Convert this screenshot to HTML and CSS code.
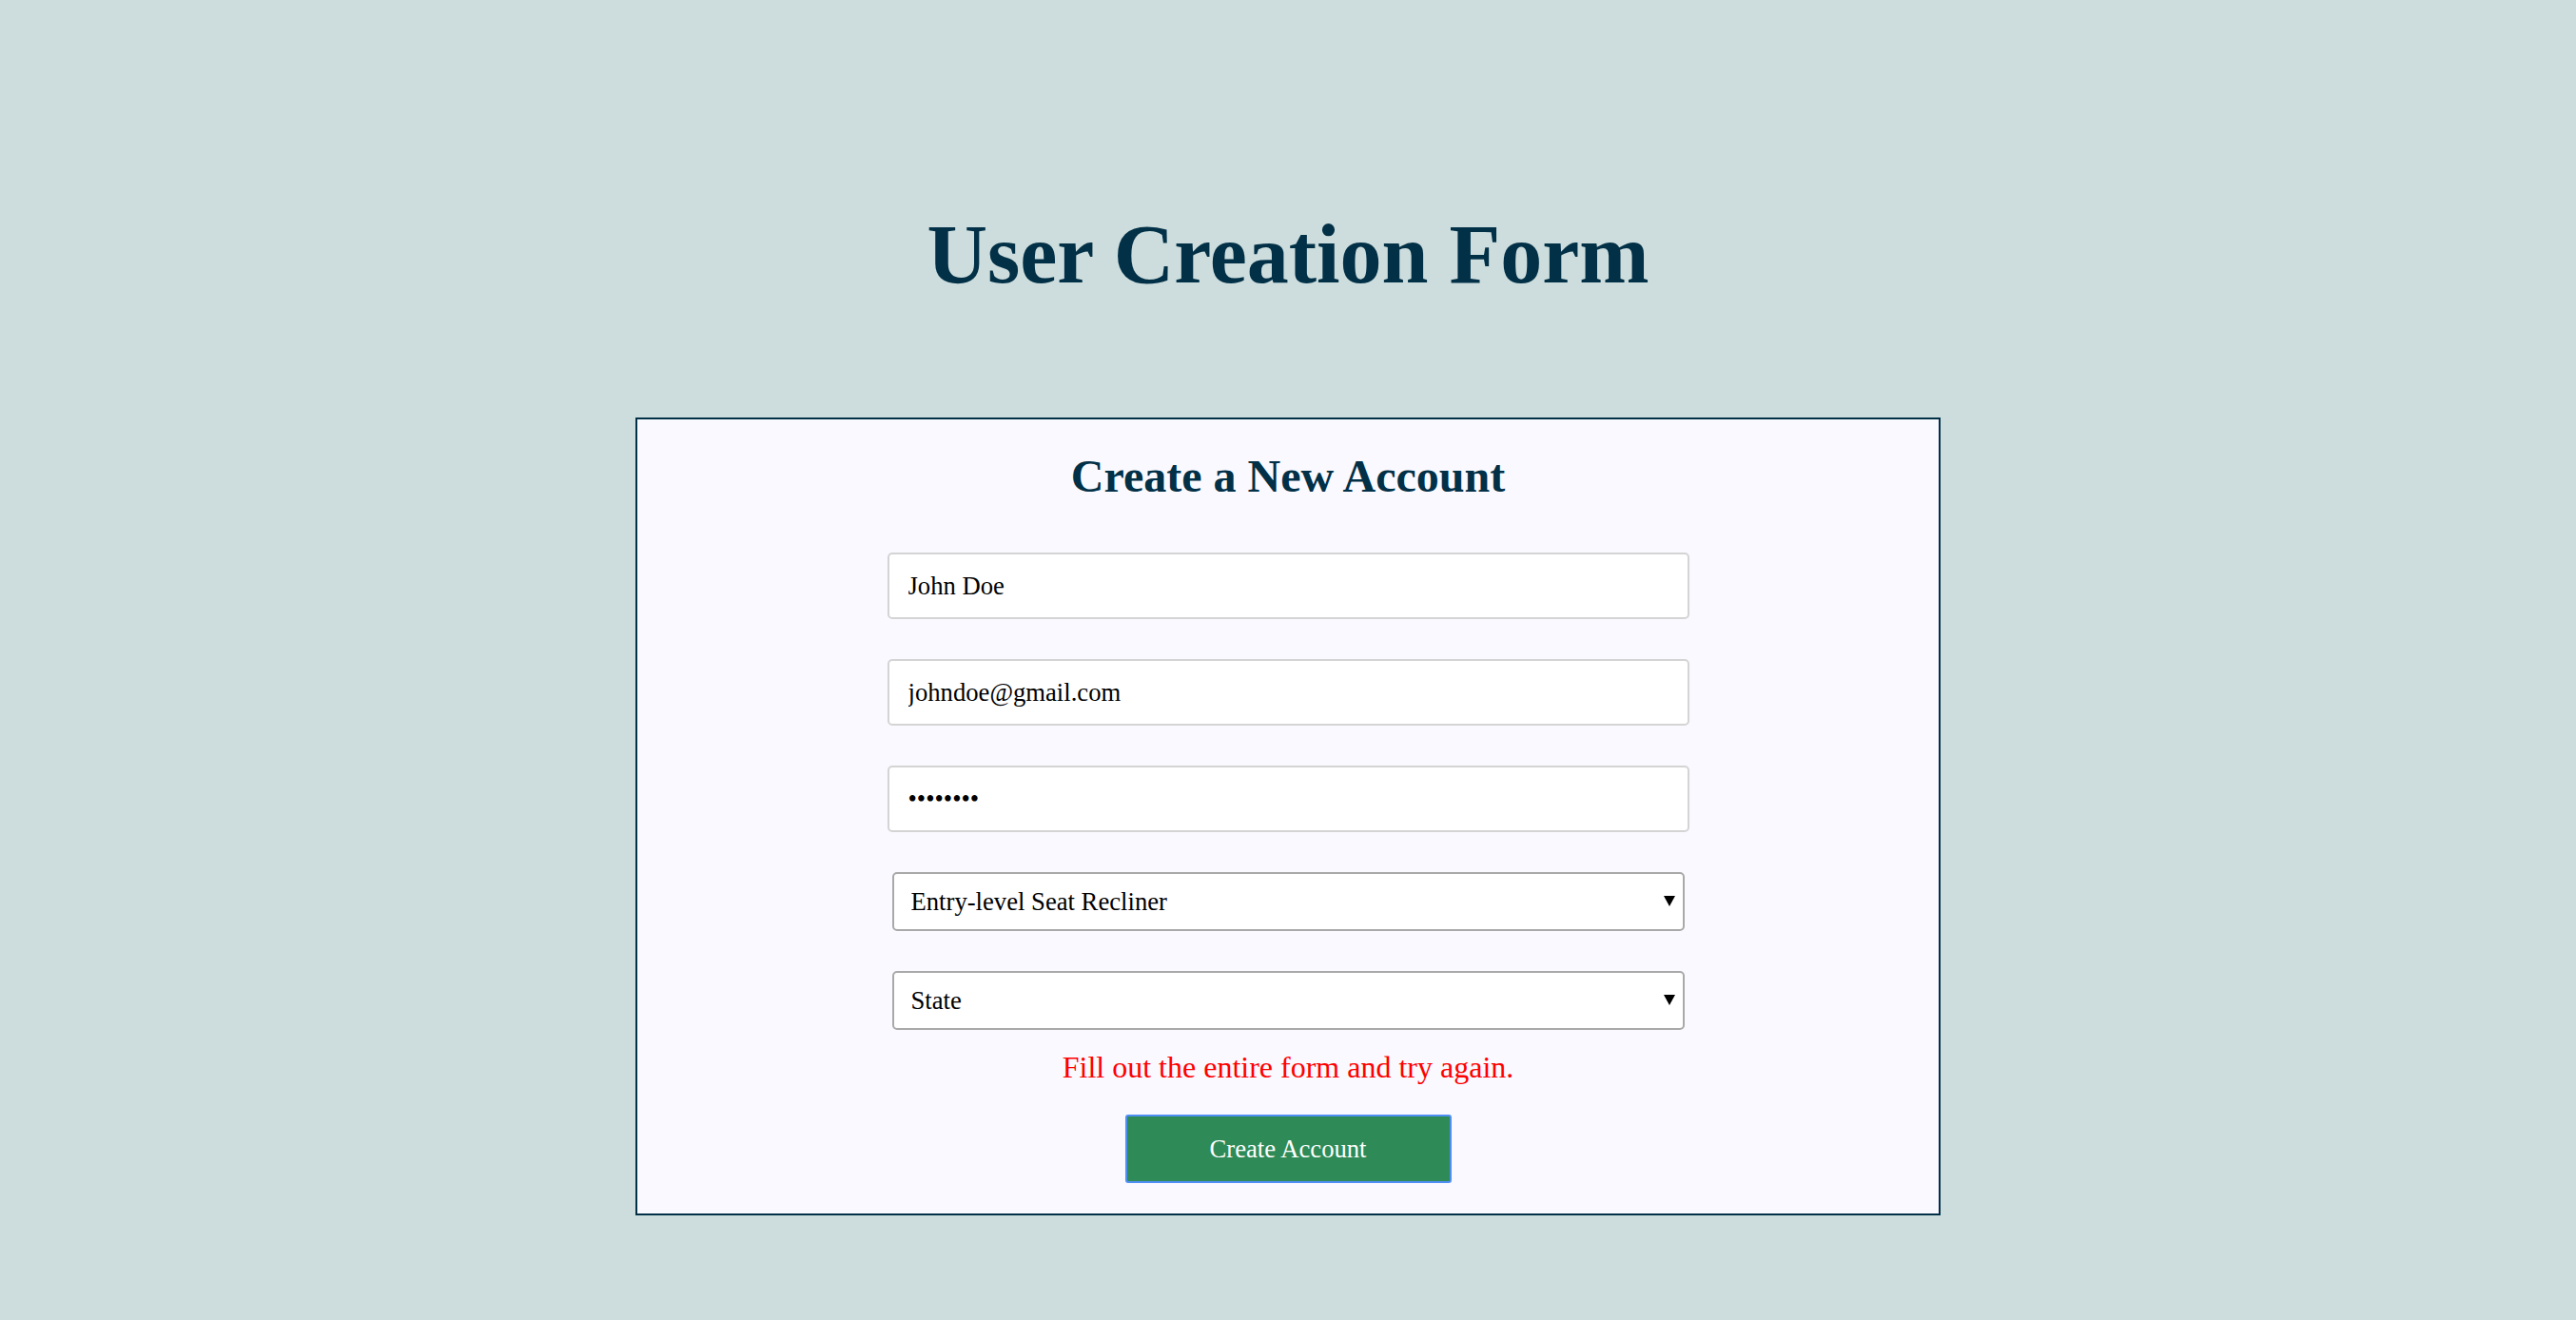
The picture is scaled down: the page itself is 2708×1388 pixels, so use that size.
FILE: index.html
```html
<!DOCTYPE html>
<html lang="en">
<head>
<meta charset="utf-8">
<title>User Creation Form</title>
<link rel="stylesheet" href="styles.css">
</head>
<body>
  <h1 class="page-title">User Creation Form</h1>
  <div class="card">
    <h2 class="card-title">Create a New Account</h2>
    <form class="form">
      <input class="field" type="text" value="John Doe">
      <input class="field" type="email" value="johndoe@gmail.com">
      <input class="field" type="password" value="12345678">
      <div class="select-wrap">
        <select class="choice">
          <option>Entry-level Seat Recliner</option>
        </select>
      </div>
      <div class="select-wrap">
        <select class="choice">
          <option>State</option>
        </select>
      </div>
      <p class="error">Fill out the entire form and try again.</p>
      <button class="submit" type="button">Create Account</button>
    </form>
  </div>
</body>
</html>
```

FILE: styles.css
```css
html, body {
  margin: 0;
  padding: 0;
}

body {
  background: #cddddd;
  font-family: "Liberation Serif", "Times New Roman", serif;
  min-height: 1388px;
}

.page-title {
  margin: 217px 0 121px;
  font-size: 88px;
  line-height: 101px;
  font-weight: bold;
  text-align: center;
  color: #023047;
}

.card {
  box-sizing: border-box;
  width: 1372px;
  margin: 0 auto;
  border: 2px solid #023047;
  background: #f9f9ff;
  padding: 32px 0 32px;
}

.card-title {
  margin: 0;
  font-size: 48px;
  line-height: 55px;
  font-weight: bold;
  text-align: center;
  color: #023047;
}

.form {
  display: flex;
  flex-direction: column;
  align-items: center;
  margin-top: 53px;
}

.field {
  box-sizing: border-box;
  width: 843px;
  height: 70px;
  margin: 0 0 42px;
  padding: 0 19px 0 20px;
  border: 2px solid #d4d4d4;
  border-radius: 5px;
  background: #ffffff;
  font-family: "Liberation Serif", "Times New Roman", serif;
  font-size: 26.67px;
  color: #000;
  outline: none;
}

.select-wrap {
  position: relative;
  width: 833px;
  height: 62px;
  margin-bottom: 42px;
}

.select-wrap:last-of-type {
  margin-bottom: 21px;
}

.select-wrap::after {
  content: "";
  position: absolute;
  right: 10px;
  top: 25px;
  width: 0;
  height: 0;
  border-left: 6px solid transparent;
  border-right: 6px solid transparent;
  border-top: 11px solid #000;
  pointer-events: none;
}

.choice {
  -webkit-appearance: none;
  appearance: none;
  box-sizing: border-box;
  width: 100%;
  height: 100%;
  margin: 0;
  padding: 0 17px 0 18px;
  border: 2px solid #a9a9a9;
  border-radius: 5px;
  background: #ffffff;
  font-family: "Liberation Serif", "Times New Roman", serif;
  font-size: 26.67px;
  color: #000;
  outline: none;
}

.error {
  margin: 0 0 31px;
  font-size: 32px;
  line-height: 37px;
  color: #ff0000;
  text-align: center;
}

.submit {
  box-sizing: border-box;
  width: 343px;
  height: 72px;
  margin: 0;
  border: 2px solid #4f8ff5;
  border-radius: 3px;
  background: #2e8b57;
  color: #ffffff;
  font-family: "Liberation Serif", "Times New Roman", serif;
  font-size: 26.67px;
  cursor: pointer;
}
```
